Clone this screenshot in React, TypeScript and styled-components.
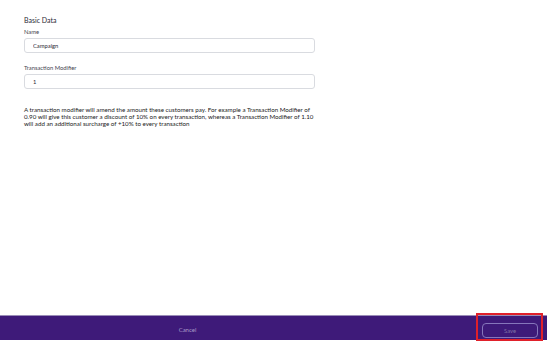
import React from 'react';
import styled, { createGlobalStyle } from 'styled-components';

const GlobalStyle = createGlobalStyle`
    html, body {
        margin: 0;
        padding: 0;
        background: #ffffff;
    }
    body {
        font-family: Lato, 'Noto Sans', 'Liberation Sans', sans-serif;
        color: #1f1f2b;
    }
`;

const Page = styled.div`
    position: relative;
    display: flex;
    flex-direction: column;
    height: 341px;
    overflow: hidden;
`;

const Content = styled.div`
    flex: 1;
    padding: 16px 0 0 24px;
`;

const SectionTitle = styled.div`
    font-size: 7px;
    line-height: 8px;
    color: #2a2a35;
    margin-bottom: 4px;
`;

const Label = styled.div`
    font-size: 5.8px;
    line-height: 7px;
    color: #44444f;
    margin-bottom: 3px;
`;

const Field = styled.div<{ $gap?: number }>`
    margin-top: ${(p) => p.$gap ?? 0}px;
`;

const Input = styled.input`
    box-sizing: border-box;
    display: block;
    width: 291px;
    height: 15px;
    padding: 0 8px;
    border: 1px solid #d9dbe0;
    border-radius: 3px;
    font-family: inherit;
    font-size: 5.8px;
    color: #2a2a35;
    background: #fff;
    outline: none;
`;

const Hint = styled.p`
    margin: 17px 0 0;
    width: 292px;
    font-size: 6.2px;
    line-height: 7px;
    color: #1a1a22;
`;

const Footer = styled.div`
    display: flex;
    align-items: center;
    height: 25px;
    margin-bottom: 1px;
    background: #3e1a79;
    border-top: 1px solid #9a8db8;
    box-sizing: border-box;
`;

const CancelButton = styled.button`
    width: 375px;
    background: none;
    border: none;
    font-family: inherit;
    font-size: 6px;
    color: #a89cc8;
    padding: 0;
    margin-top: 2px;
`;

const SaveButton = styled.button`
    margin-left: auto;
    margin-right: 9px;
    margin-top: 5px;
    width: 56px;
    height: 15px;
    background: transparent;
    border: 1px solid #8676bb;
    border-radius: 4px;
    font-family: inherit;
    font-size: 5.8px;
    color: #7f72a6;
    padding: 0;
`;

const Highlight = styled.div`
    position: absolute;
    left: 476px;
    top: 313px;
    width: 67px;
    height: 28px;
    box-sizing: border-box;
    border: 2px solid #e0202a;
    pointer-events: none;
`;

const App: React.FC = () => {
    return (
        <Page>
            <GlobalStyle />
            <Content>
                <SectionTitle>Basic Data</SectionTitle>
                <Field>
                    <Label>Name</Label>
                    <Input defaultValue="Campaign" />
                </Field>
                <Field $gap={11}>
                    <Label>Transaction Modifier</Label>
                    <Input defaultValue="1" />
                </Field>
                <Hint>
                    A transaction modifier will amend the amount these customers pay. For example a Transaction Modifier of
                    0.90 will give this customer a discount of 10% on every transaction, whereas a Transaction Modifier of 1.10
                    will add an additional surcharge of +10% to every transaction
                </Hint>
            </Content>
            <Footer>
                <CancelButton>Cancel</CancelButton>
                <SaveButton disabled>Save</SaveButton>
            </Footer>
            <Highlight />
        </Page>
    );
};

export default App;
